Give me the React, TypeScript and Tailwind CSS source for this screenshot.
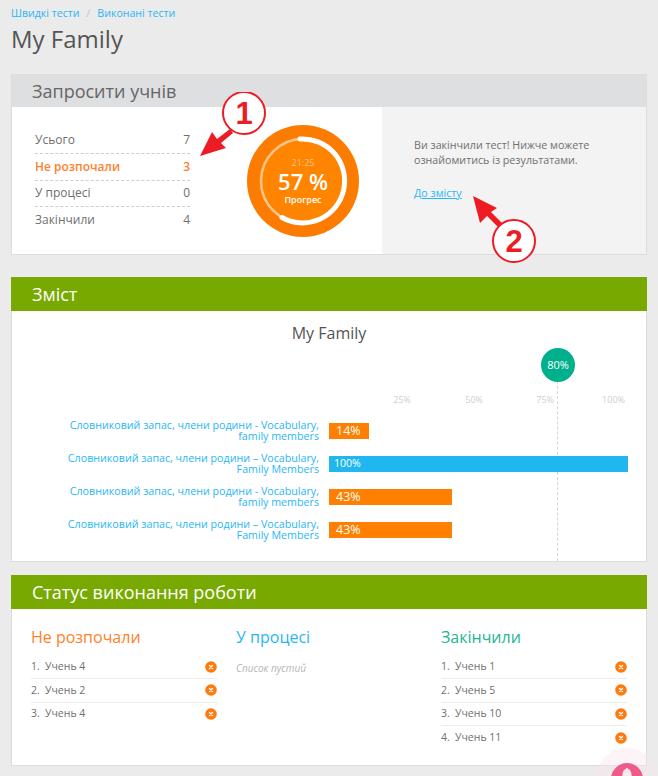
const stats = [
  { label: "Усього", value: 7 },
  { label: "Не розпочали", value: 3, active: true },
  { label: "У процесі", value: 0 },
  { label: "Закінчили", value: 4 },
];

const bars = [
  { first: "Словниковий запас, члени родини - Vocabulary,", second: "family members", pct: 14, width: 40, blue: false },
  { first: "Словниковий запас, члени родини – Vocabulary,", second: "Family Members", pct: 100, width: 299, blue: true },
  { first: "Словниковий запас, члени родини - Vocabulary,", second: "family members", pct: 43, width: 123, blue: false },
  { first: "Словниковий запас, члени родини – Vocabulary,", second: "Family Members", pct: 43, width: 123, blue: false },
];

function RemoveIcon() {
  return (
    <svg width="12" height="12" viewBox="0 0 12 12" className="shrink-0">
      <circle cx="6" cy="6" r="5.8" fill="#ff7a0d" />
      <path d="M4.5 4.5l3 3M7.5 4.5l-3 3" stroke="#fff" strokeWidth="1.4" strokeLinecap="round" />
    </svg>
  );
}

function StudentList({ names }: { names: string[] }) {
  return (
    <ul>
      {names.map((name, i) => (
        <li
          key={i}
          className="flex h-[23.3px] items-center justify-between border-b border-[#ececec] text-[10.5px] text-[#6f6f6f] last:border-b-0"
        >
          <span className="flex">
            <span className="w-[14px]">{i + 1}.</span>
            <span>{name}</span>
          </span>
          <RemoveIcon />
        </li>
      ))}
    </ul>
  );
}

function Callout({ n, cx, cy, className, arrow }: { n: number; cx: number; cy: number; className: string; arrow: string }) {
  return (
    <svg width="90" height="90" viewBox="0 0 90 90" className={className}>
      <path d={arrow} fill="#ed1c24" />
      <circle cx={cx} cy={cy} r="21" fill="#fff" stroke="#ed1c24" strokeWidth="2" />
      <text
        x={cx}
        y={cy + 11}
        textAnchor="middle"
        fontSize="31"
        fontWeight="700"
        fontFamily="Liberation Sans, sans-serif"
        fill="#ed1c24"
      >
        {n}
      </text>
    </svg>
  );
}

function ProgressRing() {
  return (
    <div className="relative flex h-[112px] w-[112px] flex-col items-center justify-center rounded-full bg-[#fb7c00] text-white">
      <svg width="112" height="112" viewBox="0 0 112 112" className="absolute inset-0">
        <circle cx="56" cy="56" r="44" fill="#ff8400" />
        <circle cx="56" cy="56" r="42" fill="none" stroke="#ffc48c" strokeWidth="2.5" />
        <path d="M53 14A42 42 0 1 1 35 92.5" fill="none" stroke="#fff" strokeWidth="5" strokeLinecap="round" />
      </svg>
      <div className="relative mt-[2px] text-center">
        <div className="text-[9px] leading-[11px] text-[#ffc48c]">21:25</div>
        <div className="text-[22px] font-semibold leading-[26px]">57 %</div>
        <div className="text-[9px] font-semibold leading-[12px]">Прогрес</div>
      </div>
    </div>
  );
}

export default function App() {
  return (
    <div className="relative h-[776px] w-[658px] overflow-hidden bg-[#ebebeb] font-['Open_Sans',sans-serif]">
      <div className="px-[11px] pt-[7px]">
        {/* Breadcrumbs */}
        <div className="flex h-[14px] items-center text-[10.6px] text-[#29b6f6]">
          <span>Швидкі тести</span>
          <span className="mx-[7px] text-[#c4c4c4]">/</span>
          <span>Виконані тести</span>
        </div>
        <h1 className="mt-[3px] h-[50px] text-[24px] leading-[30px] text-[#555]">My Family</h1>

        {/* Invite card */}
        <section className="h-[181px] border border-[#dcdcdc] bg-white">
          <div className="flex h-[32px] items-center bg-[#dedfe1] pl-[20px] text-[18px] text-[#666]">Запросити учнів</div>
          <div className="flex h-[147px]">
            <div className="flex w-[370px] items-center bg-white pl-[23px]">
              <ul className="w-[155px]">
                {stats.map((s, i) => (
                  <li
                    key={i}
                    className={`flex h-[26.6px] items-center justify-between border-b border-dashed border-[#cfcfcf] text-[12px] last:border-b-0 ${
                      s.active ? "font-semibold text-[#ff7f2a]" : "text-[#6f6f6f]"
                    }`}
                  >
                    <span>{s.label}</span>
                    <span>{s.value}</span>
                  </li>
                ))}
              </ul>
              <div className="ml-[57px]">
                <ProgressRing />
              </div>
            </div>
            <div className="flex-1 bg-[#f3f3f3] pl-[32px] pt-[31px] text-[10.7px] leading-[14.5px] text-[#6f6f6f]">
              <p>
                Ви закінчили тест! Нижче можете
                <br />
                ознайомитись із результатами.
              </p>
              <a className="mt-[19px] block text-[#29b6f6] underline">До змісту</a>
            </div>
          </div>
        </section>

        {/* Contents card */}
        <section className="mt-[22px] h-[285px] border border-[#dcdcdc] bg-white">
          <div className="-mx-px -mt-px flex h-[34px] items-center bg-[#78a900] pl-[21px] text-[18px] text-white">Зміст</div>
          <div className="relative">
            <h2 className="pt-[11px] text-center text-[16px] leading-[22px] text-[#555]">My Family</h2>
            {/* Target line */}
            <div className="absolute left-[545px] top-[70px] h-[180px] border-l border-dashed border-[#d5d5d5]" />
            <div className="absolute left-[529px] top-[37px] flex h-[34px] w-[34px] items-center justify-center rounded-full bg-[#00b08c] text-[11px] text-white">
              80%
            </div>
            <div className="relative ml-[317px] mt-[49px] flex h-[14px] w-[299px] text-right text-[9px] leading-[14px] text-[#cfcfcf]">
              <span className="w-[82px]">25%</span>
              <span className="w-[72px]">50%</span>
              <span className="w-[71px]">75%</span>
              <span className="w-[71px]">100%</span>
            </div>
            <div className="relative mt-[16px] flex flex-col gap-[17px]">
              {bars.map((b, i) => (
                <div key={i} className="flex h-[16px] items-center">
                  <div className="w-[307px] shrink-0 text-right text-[10.7px] leading-[11px] text-[#29b6f6]">
                    {b.first}
                    <br />
                    {b.second}
                  </div>
                  <div
                    className={`ml-[10px] flex h-[16px] items-center ${
                      b.blue ? "bg-[#20b7ef] pl-[5px] text-[10.5px]" : "bg-[#ff7f00] pl-[7px] text-[12.5px]"
                    } text-white`}
                    style={{ width: b.width }}
                  >
                    {b.pct}%
                  </div>
                </div>
              ))}
            </div>
          </div>
        </section>

        {/* Status card */}
        <section className="mt-[13px] h-[191px] border border-[#dcdcdc] bg-white">
          <div className="-mx-px -mt-px flex h-[34px] items-center bg-[#78a900] pl-[21px] text-[18px] text-white">
            Статус виконання роботи
          </div>
          <div className="flex pl-[19px] pt-[16px]">
            <div className="w-[186px]">
              <h3 className="text-[16px] leading-[24px] text-[#ff7f2a]">Не розпочали</h3>
              <div className="mt-[7px]">
                <StudentList names={["Учень 4", "Учень 2", "Учень 4"]} />
              </div>
            </div>
            <div className="ml-[19px] w-[186px]">
              <h3 className="text-[16px] leading-[24px] text-[#29b6f6]">У процесі</h3>
              <p className="mt-[12px] text-[10px] italic text-[#b5b5b5]">Список пустий</p>
            </div>
            <div className="ml-[19px] w-[186px]">
              <h3 className="text-[16px] leading-[24px] text-[#26b594]">Закінчили</h3>
              <div className="mt-[7px]">
                <StudentList names={["Учень 1", "Учень 5", "Учень 10", "Учень 11"]} />
              </div>
            </div>
          </div>
        </section>
      </div>

      {/* Annotations */}
      <Callout
        n={1}
        cx={67}
        cy={21}
        className="absolute left-[177px] top-[92px]"
        arrow="M23 64L35 40L40 47L53 37L56 41L44 51L49 56Z"
      />
      <Callout
        n={2}
        cx={54}
        cy={63}
        className="absolute left-[460px] top-[178px]"
        arrow="M13 18L37 30L31 34L42 45L38 49L27 38L20 45Z"
      />

      {/* Help bubble */}
      <div className="absolute left-[596px] top-[748px] flex h-[62px] w-[62px] items-center justify-center rounded-full bg-[#f9e4ea]/40">
        <div className="flex h-[32px] w-[32px] justify-center rounded-full bg-[#ee5a8a]">
          <svg width="14" height="14" viewBox="0 0 14 14" className="mt-[5px]">
            <circle cx="7" cy="1.5" r="1.5" fill="#fbe9ee" />
            <path d="M7 1C3.5 1 2.5 4 2.5 7L1 12H13L11.5 7C11.5 4 10.5 1 7 1Z" fill="#fbe9ee" />
          </svg>
        </div>
      </div>
    </div>
  );
}
